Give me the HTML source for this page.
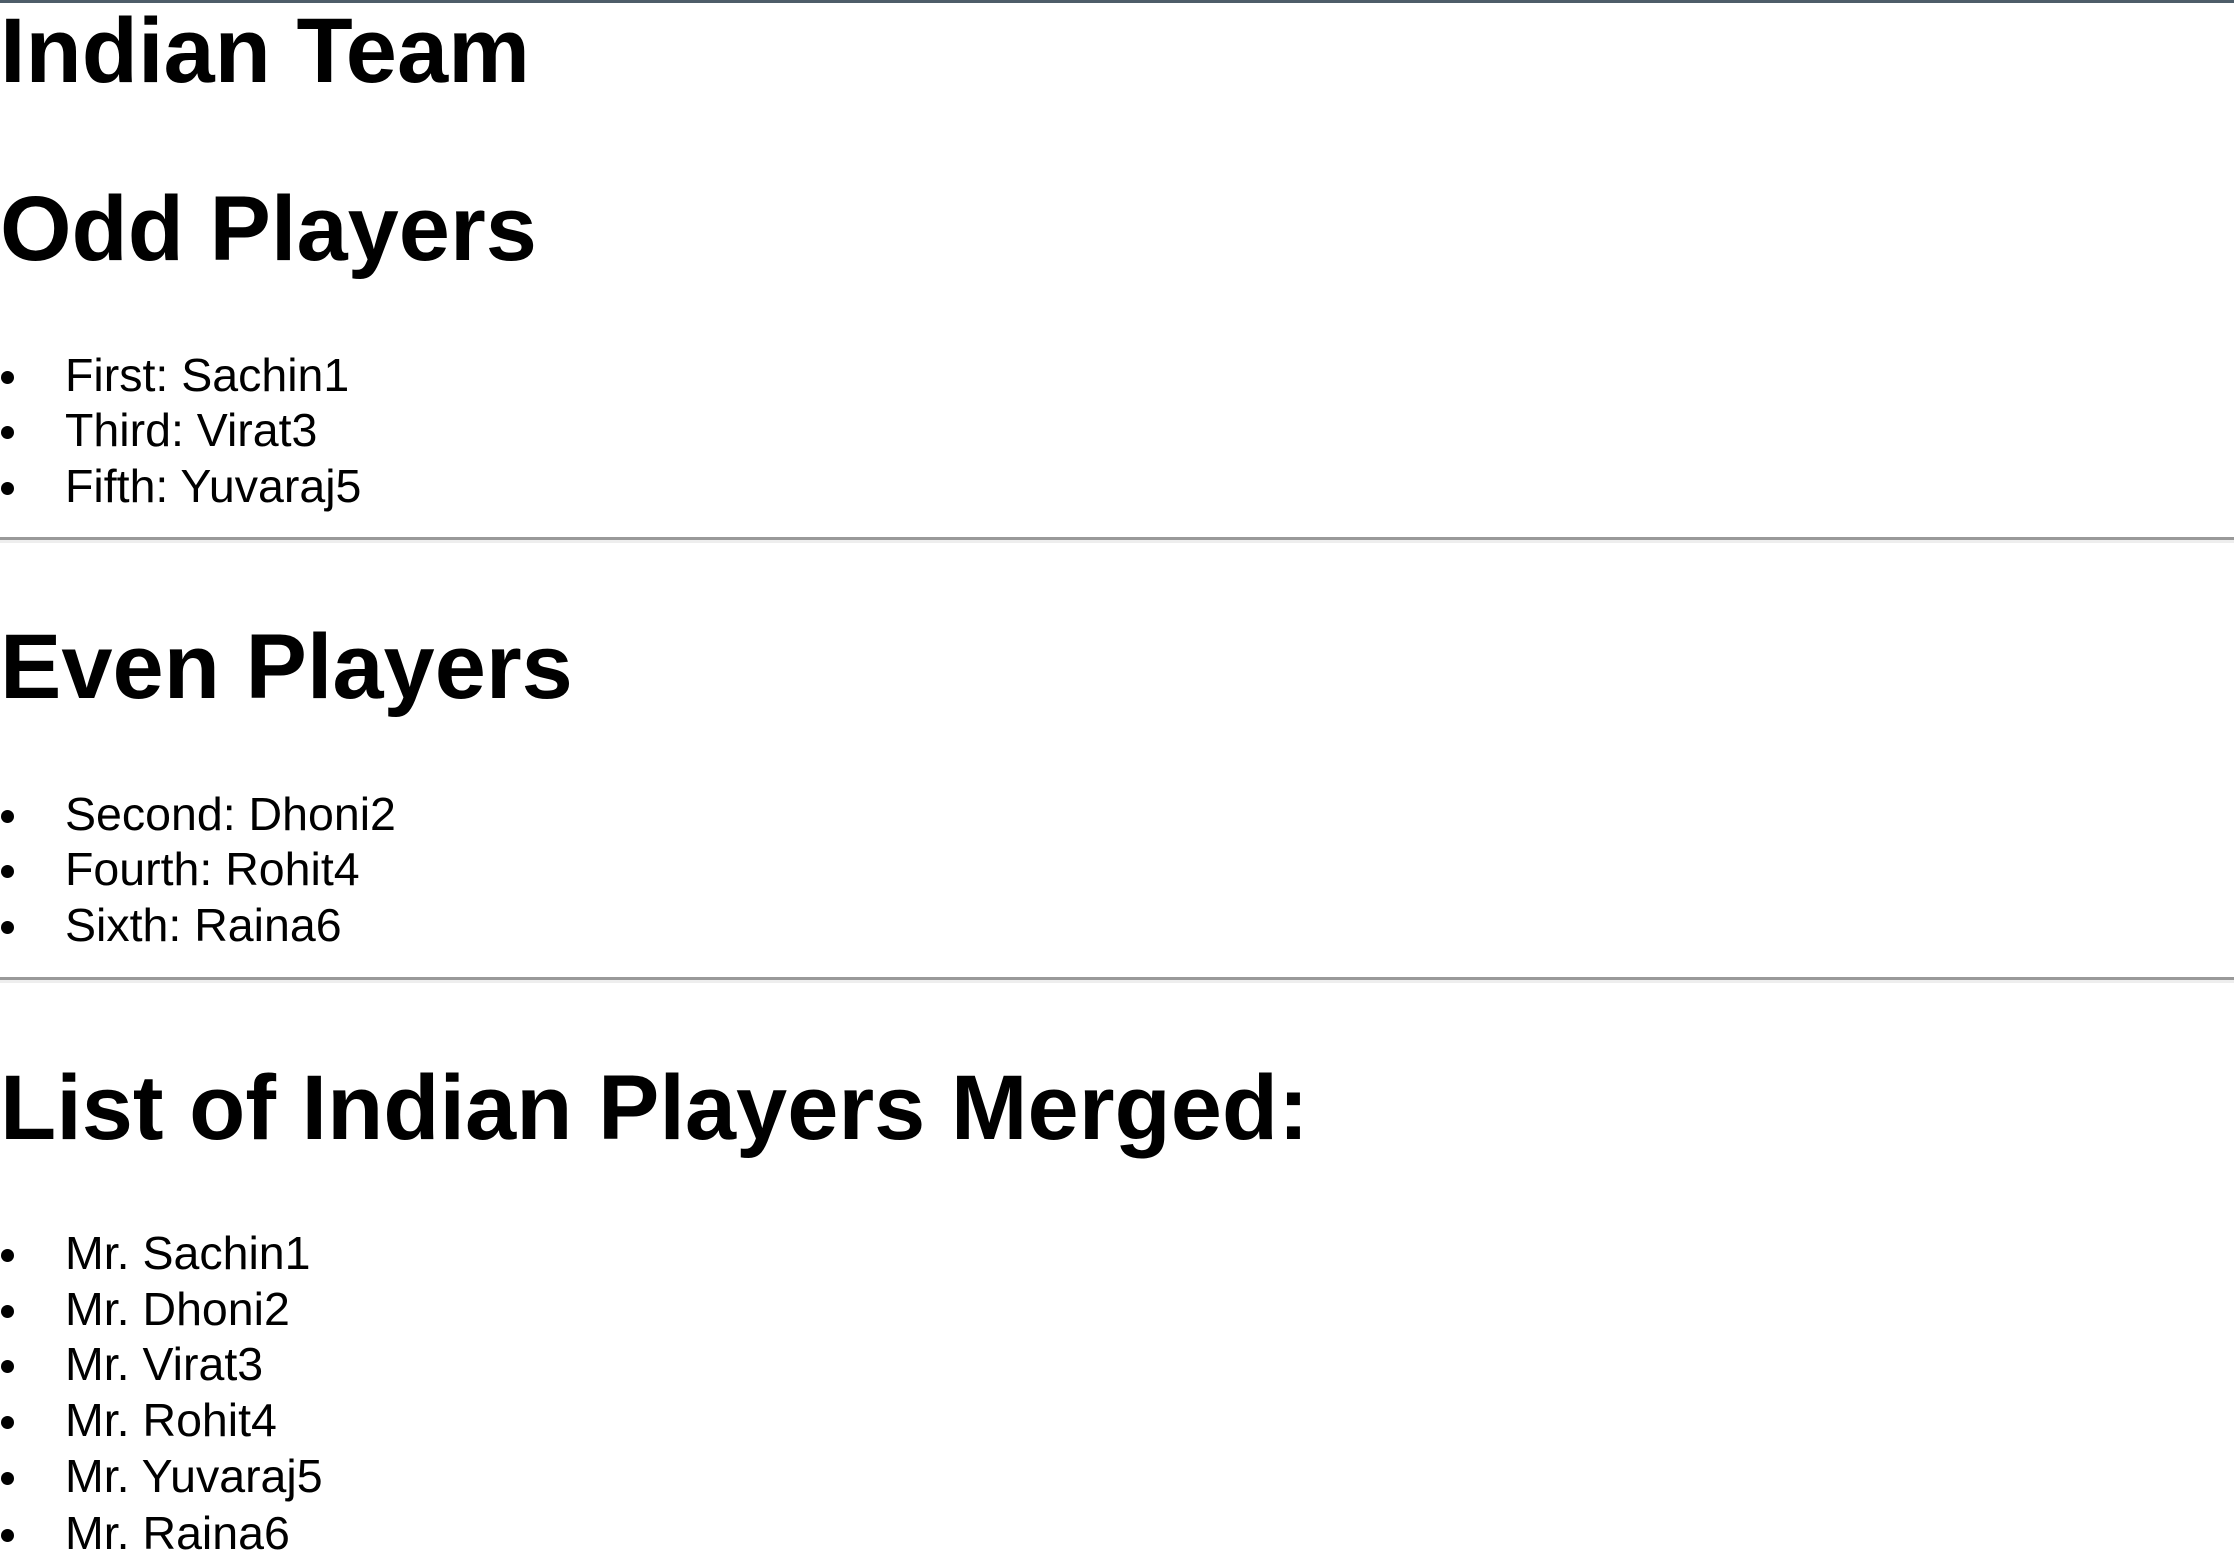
<!DOCTYPE html>
<html><head><meta charset="utf-8"><style>
html,body{margin:0;padding:0;background:#fff;width:2234px;height:1558px;overflow:hidden;position:relative;font-family:"Liberation Sans",Arial,sans-serif;color:#000}
.t{position:absolute;left:0;white-space:nowrap;line-height:1}
.h{font-size:92px;font-weight:bold}
.l{font-size:46.5px;left:65px}
.b{position:absolute;left:1px;width:13px;height:13px;border-radius:50%;background:#000}
.hr{position:absolute;left:0;width:2234px;height:3px;background:#999;border-bottom:3px solid #eee}
.top{position:absolute;left:0;top:0;width:2234px;height:3px;background:#4e5d69}
</style></head><body>
<div class="top"></div>
<div class="t h" style="top:5px">Indian Team</div>
<div class="t h" style="top:183px">Odd Players</div>
<div class="t l" style="top:352px">First: Sachin1</div><div class="b" style="top:371px"></div>
<div class="t l" style="top:407px">Third: Virat3</div><div class="b" style="top:426px"></div>
<div class="t l" style="top:463px">Fifth: Yuvaraj5</div><div class="b" style="top:482px"></div>
<div class="hr" style="top:537px"></div>
<div class="t h" style="top:621px">Even Players</div>
<div class="t l" style="top:791px">Second: Dhoni2</div><div class="b" style="top:810px"></div>
<div class="t l" style="top:846px">Fourth: Rohit4</div><div class="b" style="top:865px"></div>
<div class="t l" style="top:902px">Sixth: Raina6</div><div class="b" style="top:921px"></div>
<div class="hr" style="top:977px"></div>
<div class="t h" style="top:1062px">List of Indian Players Merged:</div>
<div class="t l" style="top:1230px">Mr. Sachin1</div><div class="b" style="top:1249px"></div>
<div class="t l" style="top:1286px">Mr. Dhoni2</div><div class="b" style="top:1305px"></div>
<div class="t l" style="top:1341px">Mr. Virat3</div><div class="b" style="top:1360px"></div>
<div class="t l" style="top:1397px">Mr. Rohit4</div><div class="b" style="top:1416px"></div>
<div class="t l" style="top:1453px">Mr. Yuvaraj5</div><div class="b" style="top:1472px"></div>
<div class="t l" style="top:1510px">Mr. Raina6</div><div class="b" style="top:1529px"></div>
</body></html>
